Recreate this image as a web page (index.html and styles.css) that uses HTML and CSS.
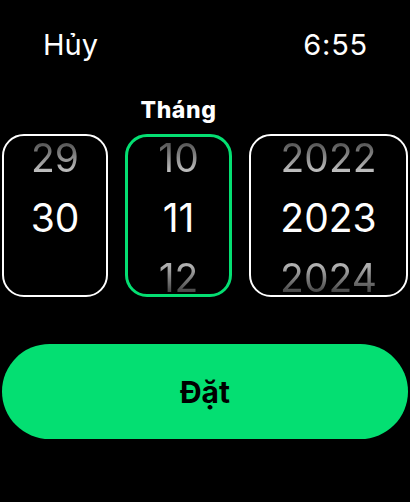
FILE: index.html
```html
<!DOCTYPE html>
<html lang="vi">
<head>
<meta charset="utf-8">
<link rel="stylesheet" href="styles.css">
</head>
<body>
<div class="screen">
  <header class="topbar">
    <span class="cancel">Hủy</span>
    <span class="clock">6:55</span>
  </header>
  <div class="labels">
    <span class="label-spacer narrow"></span>
    <span class="label mid">Tháng</span>
    <span class="label-spacer wide"></span>
  </div>
  <div class="pickers">
    <div class="wheel narrow">
      <div class="items">
        <span class="item prev">29</span>
        <span class="item cur">30</span>
        <span class="item next"></span>
      </div>
    </div>
    <div class="wheel mid active">
      <div class="items">
        <span class="item prev">10</span>
        <span class="item cur">11</span>
        <span class="item next">12</span>
      </div>
    </div>
    <div class="wheel wide">
      <div class="items">
        <span class="item prev">2022</span>
        <span class="item cur">2023</span>
        <span class="item next">2024</span>
      </div>
    </div>
  </div>
  <button class="set">Đặt</button>
</div>
</body>
</html>
```

FILE: styles.css
```css
html, body {
  margin: 0;
  padding: 0;
  background: #000;
}
body {
  width: 410px;
  height: 502px;
  overflow: hidden;
  font-family: Inter, "Liberation Sans", sans-serif;
  color: #fff;
}
.screen {
  display: flex;
  flex-direction: column;
}
.topbar {
  display: flex;
  justify-content: space-between;
  align-items: center;
  padding: 25px 43px 0 43px;
  height: 40px;
  font-size: 29px;
  line-height: 40px;
}
.clock {
  letter-spacing: 0.8px;
  margin-right: -1px;
}
.labels {
  display: flex;
  gap: 17px;
  padding: 0 2px;
  margin-top: 31px;
  height: 28px;
}
.label-spacer.narrow { width: 106px; }
.label-spacer.wide { width: 159px; }
.label {
  width: 107px;
  text-align: center;
  font-weight: 800;
  font-size: 23px;
  letter-spacing: 0.6px;
  line-height: 28px;
}
.pickers {
  display: flex;
  gap: 17px;
  padding: 0 2px;
  margin-top: 10px;
}
.wheel {
  box-sizing: border-box;
  height: 163px;
  border: 2px solid #fff;
  border-radius: 22px;
  overflow: hidden;
}
.wheel.narrow { width: 106px; }
.wheel.mid { width: 107px; }
.wheel.wide { width: 159px; }
.wheel.active {
  border: 3px solid #04df72;
}
.items {
  display: flex;
  flex-direction: column;
  align-items: center;
  margin-top: -8px;
}
.wheel.active .items { margin-top: -9px; }
.item {
  height: 60px;
  line-height: 60px;
  font-size: 39px;
  font-weight: 400;
}
.item.prev {
  background: linear-gradient(180deg, #555 25%, #d0d0d0 80%);
  -webkit-background-clip: text;
  background-clip: text;
  color: transparent;
}
.item.next {
  background: linear-gradient(180deg, #b0b0b0 30%, #2a2a2a 85%);
  -webkit-background-clip: text;
  background-clip: text;
  color: transparent;
}
.set {
  margin: 47px 2px 0 2px;
  height: 95px;
  border: none;
  border-radius: 48px;
  background: #04df72;
  color: #000;
  font-family: Inter, "Liberation Sans", sans-serif;
  font-weight: 700;
  font-size: 30px;
  padding: 0;
}
```
